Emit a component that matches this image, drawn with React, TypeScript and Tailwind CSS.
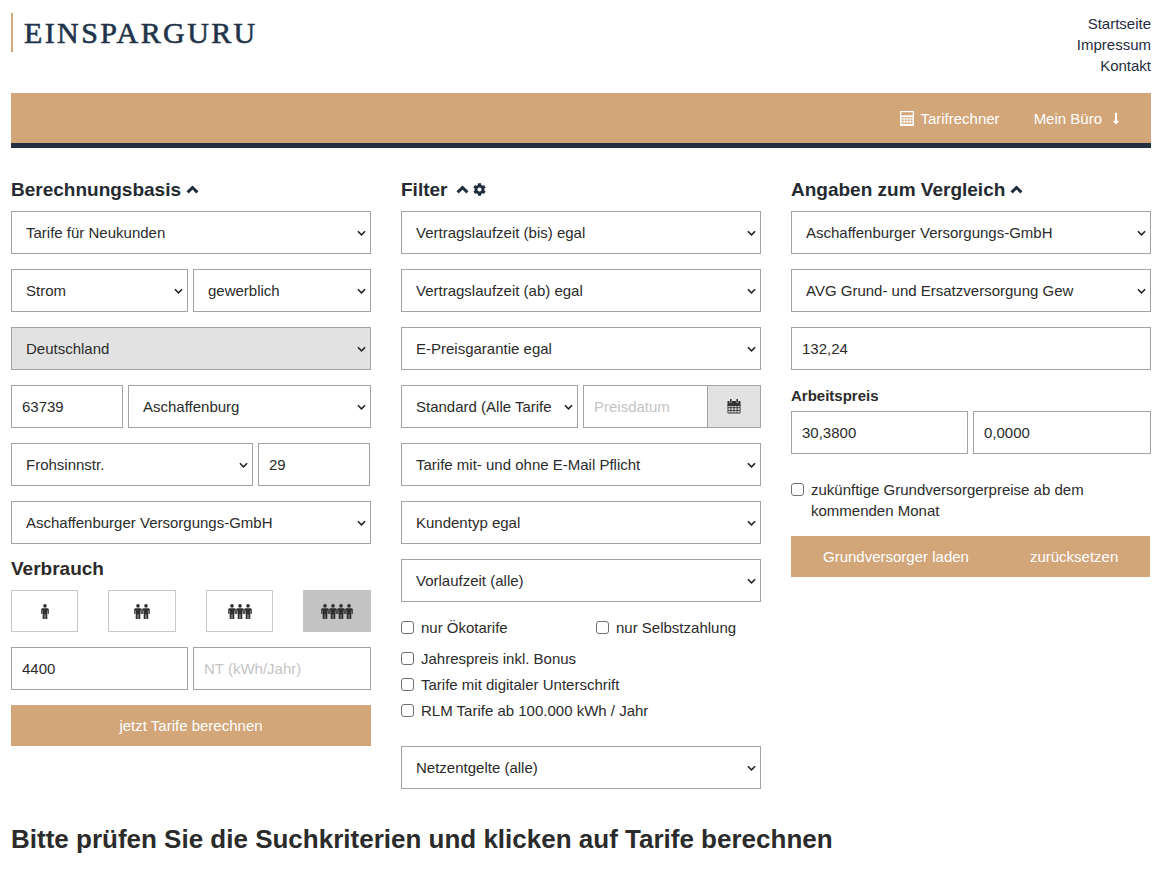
import { FaCog, FaLongArrowAltDown } from "react-icons/fa";

const Chevron = () => (
  <svg
    viewBox="0 0 10 6"
    className="absolute right-[5px] top-1/2 -translate-y-1/2 w-[9px] h-[6px] pointer-events-none"
    aria-hidden="true"
  >
    <path d="M1 1l4 4 4-4" fill="none" stroke="#222" strokeWidth="1.7" />
  </svg>
);

const Select = ({ value, className = "", muted = false }: { value: string; className?: string; muted?: boolean }) => (
  <div className={`relative h-[43px] ${className}`}>
    <select
      defaultValue={value}
      className={`w-full h-full appearance-none border border-[#a3a3a3] pl-[14px] pr-[18px] pt-[2px] text-[15px] text-[#2b2b2b] outline-none rounded-none ${
        muted ? "bg-[#e2e2e2]" : "bg-white"
      }`}
    >
      <option>{value}</option>
    </select>
    <Chevron />
  </div>
);

const Input = ({ value, placeholder, className = "" }: { value?: string; placeholder?: string; className?: string }) => (
  <input
    defaultValue={value}
    placeholder={placeholder}
    className={`h-[43px] min-w-0 border border-[#a3a3a3] bg-white px-[10px] text-[15px] text-[#2b2b2b] placeholder:text-[#c4c4c4] outline-none ${className}`}
  />
);

const Check = ({ label, className = "" }: { label: string; className?: string }) => (
  <label className={`flex items-center gap-[7px] text-[15px] text-[#2b2b2b] ${className}`}>
    <input
      type="checkbox"
      className="appearance-none w-[13px] h-[13px] shrink-0 border border-[#707070] rounded-[3px] bg-white"
    />
    <span className="pt-[1px]">{label}</span>
  </label>
);

const Heading = ({ children }: { children: React.ReactNode }) => (
  <h2 className="h-[42px] pb-[1px] flex items-center text-[19px] font-bold text-[#252a30] leading-none">{children}</h2>
);

const Up = ({ className = "" }: { className?: string }) => (
  <svg viewBox="0 0 13 9" className={`w-[13px] h-[9px] ${className}`} aria-hidden="true">
    <path d="M1.6 7.4l4.9-4.9 4.9 4.9" fill="none" stroke="#1f2d3f" strokeWidth="3" />
  </svg>
);

const Person = () => (
  <svg viewBox="0 0 8 15" className="w-[8px] h-[15px]" aria-hidden="true">
    <circle cx="4" cy="1.9" r="1.8" fill="#2f2f2f" />
    <path
      fill="#2f2f2f"
      d="M1.6 4.2h4.8q1.4 0 1.4 1.4v4.4h-1.1V6.4h-.4V15H4.3V10.2h-.6V15H1.7V6.4h-.4V10H.2V5.6q0-1.4 1.4-1.4z"
    />
  </svg>
);

const People = ({ n, active = false, className = "" }: { n: number; active?: boolean; className?: string }) => (
  <button
    className={`h-[42px] flex items-center justify-center ${
      active ? "bg-[#c3c3c3]" : "border border-[#c8c8c8] bg-white"
    } ${className}`}
  >
    {Array.from({ length: n }).map((_, i) => (
      <Person key={i} />
    ))}
  </button>
);

const Calc = () => (
  <svg viewBox="0 0 14 15" className="w-[14px] h-[15px] mr-[6px]" aria-hidden="true">
    <path
      fillRule="evenodd"
      fill="#fff"
      d="M0 0h14v15H0zM1.2 1.2v3h11.6v-3zM1.5 6v1.6h2.2V6zm3 0v1.6h2.2V6zm3 0v1.6h2.2V6zm3 0v1.6h2V6zM1.5 8.6v1.6h2.2V8.6zm3 0v1.6h2.2V8.6zm3 0v1.6h2.2V8.6zm3 0v1.6h2V8.6zM1.5 11.2v1.9h2.2v-1.9zm3 0v1.9h2.2v-1.9zm3 0v1.9h2.2v-1.9zm3 0v1.9h2v-1.9z"
    />
  </svg>
);

const Calendar = () => (
  <svg viewBox="0 0 14 15" className="w-[14px] h-[15px]" aria-hidden="true">
    <path fill="#333" d="M3 0h1.6v3H3zM9.4 0H11v3H9.4zM.5 2h2v1.6h2.4V2h4.2v1.6h2.4V2h2v5H.5z" />
    <path
      fill="none"
      stroke="#333"
      strokeWidth=".9"
      d="M.95 6v8.05h12.1V6M.95 8.7h12.1M.95 11.4h12.1M3.9 6v8M7 6v8M10.1 6v8"
    />
  </svg>
);

export default function App() {
  return (
    <div className="pl-[11px] pr-[16px] font-['Liberation_Sans',Arial,sans-serif] bg-white min-h-[869px]">
      <header className="h-[93px] flex justify-between items-start">
        <div className="mt-[13px] h-[39px] border-l-[2px] border-[#d2a679] pl-[11px] flex items-center">
          <span className="font-['Liberation_Serif',serif] text-[30px] leading-none tracking-[2.4px] text-[#22344a] [-webkit-text-stroke:0.6px_#22344a]">
            EINSPARGURU
          </span>
        </div>
        <nav className="pt-[13px] flex flex-col items-end text-[15px] leading-[21px] text-[#1f2d3f]">
          <a>Startseite</a>
          <a>Impressum</a>
          <a>Kontakt</a>
        </nav>
      </header>

      <div className="h-[55px] bg-[#d2a679] border-b-[5px] border-[#233042] flex items-center justify-end pr-[30px] text-[15px] text-white">
        <Calc />
        <span className="pt-[2px]">Tarifrechner</span>
        <span className="ml-[34px] pt-[2px]">Mein Büro</span>
        <FaLongArrowAltDown className="ml-[9px] w-[10px] h-[13px]" />
      </div>

      <main className="grid grid-cols-3 gap-[30px] mt-[21px]">
        <section className="flex flex-col">
          <Heading>
            Berechnungsbasis <Up className="ml-[5px]" />
          </Heading>
          <div className="flex flex-col gap-[15px]">
            <Select value="Tarife für Neukunden" />
            <div className="flex gap-[5px]">
              <Select value="Strom" className="w-[177px]" />
              <Select value="gewerblich" className="flex-1" />
            </div>
            <Select value="Deutschland" muted />
            <div className="flex gap-[5px]">
              <Input value="63739" className="w-[112px]" />
              <Select value="Aschaffenburg" className="flex-1" />
            </div>
            <div className="flex gap-[5px]">
              <Select value="Frohsinnstr." className="w-[242px]" />
              <Input value="29" className="w-[112px]" />
            </div>
            <Select value="Aschaffenburger Versorgungs-GmbH" />
          </div>
          <h2 className="mt-[14px] h-[22px] flex items-center text-[19px] font-bold text-[#2b2b2b]">Verbrauch</h2>
          <div className="mt-[10px] flex justify-between">
            <People n={1} className="w-[67px]" />
            <People n={2} className="w-[68px]" />
            <People n={3} className="w-[67px]" />
            <People n={4} active className="w-[68px]" />
          </div>
          <div className="mt-[15px] flex gap-[5px]">
            <Input value="4400" className="w-[177px]" />
            <Input placeholder="NT (kWh/Jahr)" className="flex-1" />
          </div>
          <button className="mt-[15px] h-[41px] pt-[1px] bg-[#d2a679] text-white text-[15px]">jetzt Tarife berechnen</button>
        </section>

        <section className="flex flex-col">
          <Heading>
            Filter
            <Up className="ml-[9px]" />
            <FaCog className="ml-[4px] w-[13px] h-[13px] text-[#1f2d3f]" />
          </Heading>
          <div className="flex flex-col gap-[15px]">
            <Select value="Vertragslaufzeit (bis) egal" />
            <Select value="Vertragslaufzeit (ab) egal" />
            <Select value="E-Preisgarantie egal" />
            <div className="flex gap-[5px]">
              <Select value="Standard (Alle Tarife" className="w-[177px]" />
              <div className="flex-1 flex min-w-0">
                <Input placeholder="Preisdatum" className="flex-1 border-r-0" />
                <span className="w-[54px] h-[43px] flex items-center justify-center bg-[#e2e2e2] border border-[#a3a3a3]">
                  <Calendar />
                </span>
              </div>
            </div>
            <Select value="Tarife mit- und ohne E-Mail Pflicht" />
            <Select value="Kundentyp egal" />
            <Select value="Vorlaufzeit (alle)" />
          </div>
          <div className="mt-[15px] flex h-[21px]">
            <Check label="nur Ökotarife" className="w-[195px]" />
            <Check label="nur Selbstzahlung" />
          </div>
          <Check label="Jahrespreis inkl. Bonus" className="mt-[10px] h-[21px]" />
          <Check label="Tarife mit digitaler Unterschrift" className="mt-[5px] h-[21px]" />
          <Check label="RLM Tarife ab 100.000 kWh / Jahr" className="mt-[5px] h-[21px]" />
          <Select value="Netzentgelte (alle)" className="mt-[25px]" />
        </section>

        <section className="flex flex-col">
          <Heading>
            Angaben zum Vergleich <Up className="ml-[5px]" />
          </Heading>
          <div className="flex flex-col gap-[15px]">
            <Select value="Aschaffenburger Versorgungs-GmbH" />
            <Select value="AVG Grund- und Ersatzversorgung Gew" />
            <Input value="132,24" />
          </div>
          <label className="mt-[17px] h-[18px] flex items-center text-[15px] font-bold text-[#2b2b2b]">Arbeitspreis</label>
          <div className="mt-[6px] flex gap-[5px]">
            <Input value="30,3800" className="w-[177px]" />
            <Input value="0,0000" className="flex-1" />
          </div>
          <label className="mt-[25px] flex gap-[7px] text-[15px] leading-[21px] text-[#2b2b2b]">
            <input
              type="checkbox"
              className="appearance-none mt-[4px] w-[13px] h-[13px] shrink-0 border border-[#707070] rounded-[3px] bg-white"
            />
            <span>zukünftige Grundversorgerpreise ab dem kommenden Monat</span>
          </label>
          <div className="mt-[15px] mr-[1px] h-[41px] pt-[1px] bg-[#d2a679] flex items-center text-[15px] text-white">
            <button className="ml-[32px]">Grundversorger laden</button>
            <button className="ml-[61px]">zurücksetzen</button>
          </div>
        </section>
      </main>

      <h1 className="mt-[35px] text-[26px] leading-[30px] font-bold text-[#2b2b2b]">
        Bitte prüfen Sie die Suchkriterien und klicken auf Tarife berechnen
      </h1>
    </div>
  );
}
